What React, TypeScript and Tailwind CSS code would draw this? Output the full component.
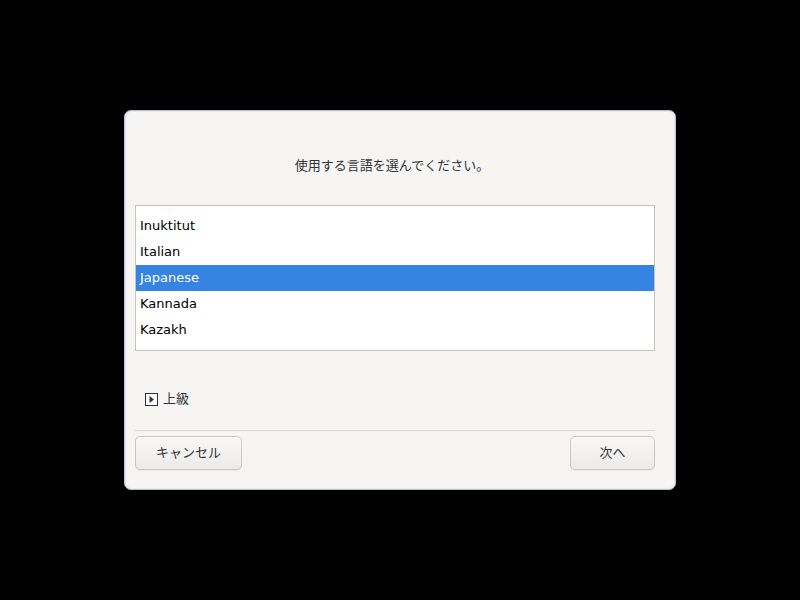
import React from "react";

const languages = ["Inuktitut", "Italian", "Japanese", "Kannada", "Kazakh", "Khmer"];

const font = { fontFamily: '"DejaVu Sans", "Noto Sans CJK JP", sans-serif' };

const ExpanderIcon: React.FC = () => (
  <svg width="13" height="13" viewBox="0 0 13 13" className="shrink-0">
    <rect x="0.5" y="0.5" width="12" height="12" fill="#ffffff" stroke="#2e3436" />
    <path d="M4.5 3 L9 6.5 L4.5 10 Z" fill="#2e3436" />
  </svg>
);

const App: React.FC = () => {
  const selected = "Japanese";

  return (
    <div className="flex h-screen w-full items-center justify-center bg-black" style={font}>
      <div className="flex h-[380px] w-[552px] flex-col rounded-[7px] border border-[#b4c2d0] bg-[#f6f5f4] pl-[10px] pr-[20px] pt-[46px] shadow-[inset_0_0_0_1px_#e3e9ef]">
        <p className="pr-[6px] text-center text-[13px] leading-[18px] text-[#2e3436]">使用する言語を選んでください。</p>

        <div className="mt-[30px] h-[146px] overflow-hidden border border-[#c6c2bd] bg-white">
          <div className="pt-[7px]">
            {languages.map((lang) => (
              <div
                key={lang}
                className={
                  lang === selected
                    ? "flex h-[26px] items-center bg-[#3584e4] pl-[4px] text-[13px] text-white"
                    : "flex h-[26px] items-center pl-[4px] text-[13px] text-black"
                }
              >
                {lang}
              </div>
            ))}
          </div>
        </div>

        <div className="mt-[39px] flex h-[18px] items-center gap-[5px] pl-[10px] text-[13px] text-[#2e3436]">
          <ExpanderIcon />
          <span>上級</span>
        </div>

        <div className="mt-[22px] h-px bg-[#dcd8d4]" />

        <div className="mt-[5px] flex items-center justify-between">
          <button className="h-[34px] w-[107px] rounded-[5px] border border-[#cdc7c2] bg-gradient-to-b from-[#f8f8f7] to-[#edebe9] text-[13px] text-[#2e3436] shadow-[0_1px_0_rgba(0,0,0,0.05)]">
            キャンセル
          </button>
          <button className="h-[34px] w-[85px] rounded-[5px] border border-[#cdc7c2] bg-gradient-to-b from-[#f8f8f7] to-[#edebe9] text-[13px] text-[#2e3436] shadow-[0_1px_0_rgba(0,0,0,0.05)]">
            次へ
          </button>
        </div>
      </div>
    </div>
  );
};

export default App;
